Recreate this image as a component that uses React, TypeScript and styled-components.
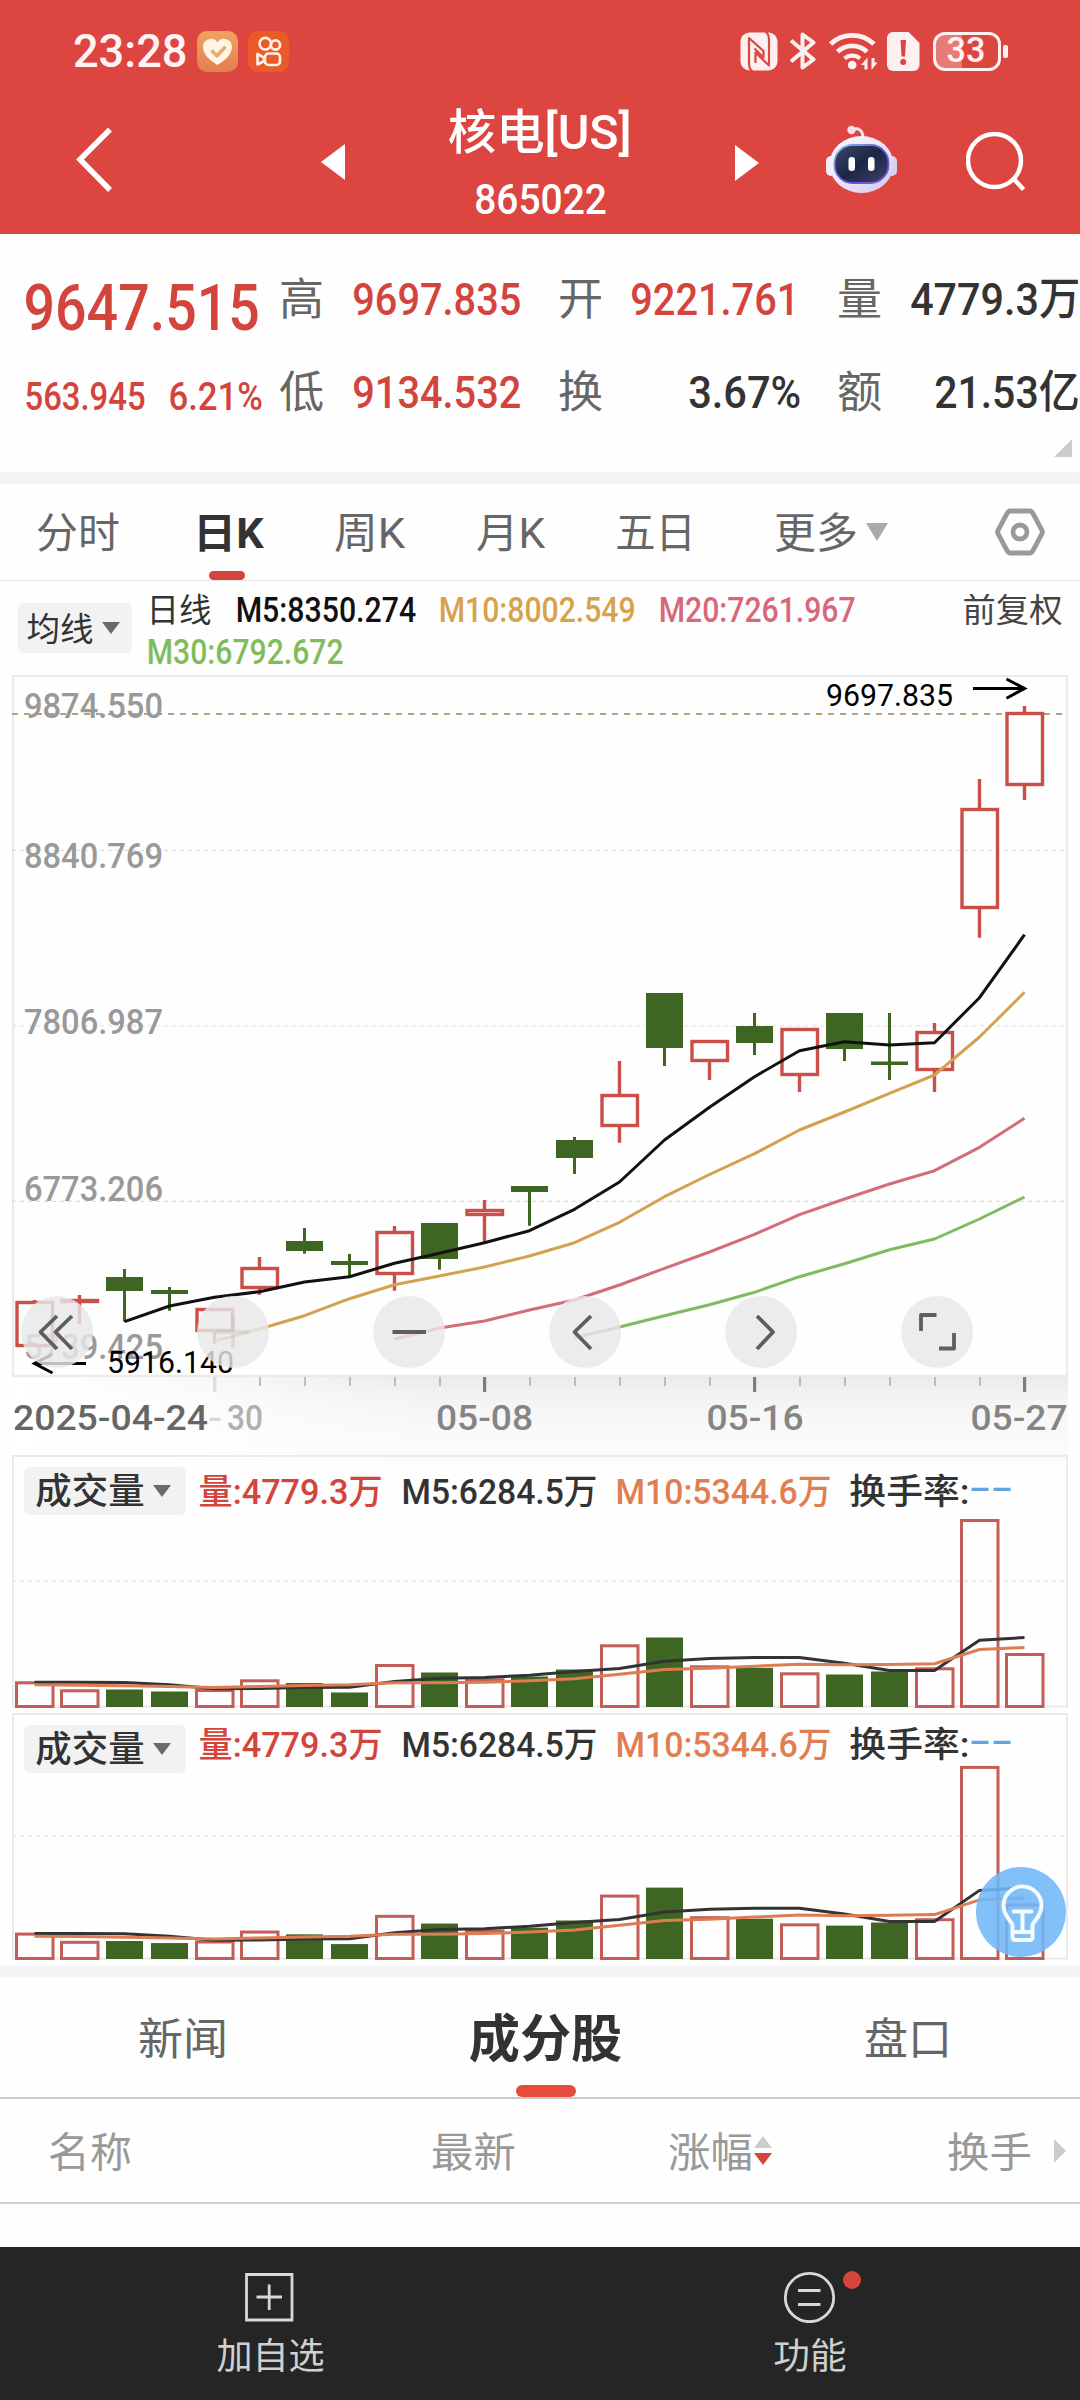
import React, { useLayoutEffect, useRef, useState } from "react";
import styled, { createGlobalStyle } from "styled-components";

const FONT = `Roboto, "Noto Sans CJK SC", sans-serif`;
const RED = "#d2443c";
const CANDLE_RED = "#c94f48";
const GREEN = "#3f6523";

const Global = createGlobalStyle`
  * { box-sizing: border-box; }
  body { margin: 0; background: #fff; font-family: ${FONT}; }
  svg { display: block; flex: none; }
`;

/* ---------- condensed text fitted to a given width ---------- */

const FitBox = styled.span<{ $w: number; $size: number; $ml: number; $lh?: number }>`
  display: block;
  flex: none;
  width: ${(p) => p.$w}px;
  margin-left: ${(p) => p.$ml}px;
  font-size: ${(p) => p.$size}px;
  line-height: ${(p) => (p.$lh ? `${p.$lh}px` : 1.2)};
`;
const FitInner = styled.span<{ $weight: number; $color: string }>`
  display: inline-block;
  white-space: pre;
  transform-origin: 0 50%;
  font-weight: ${(p) => p.$weight};
  color: ${(p) => p.$color};
`;

interface FitProps {
  w: number;
  size: number;
  ml?: number;
  dy?: number;
  lh?: number;
  weight?: number;
  color?: string;
  children: React.ReactNode;
}

function Fit({ w, size, ml = 0, dy = 1.5, lh, weight = 400, color = "#333", children }: FitProps) {
  const ref = useRef<HTMLSpanElement>(null);
  const [k, setK] = useState(1);
  const bearing = size * 0.045;
  useLayoutEffect(() => {
    if (ref.current) setK(w / (ref.current.offsetWidth - bearing * 2));
  }, [w, bearing]);
  return (
    <FitBox $w={w} $size={size} $ml={ml} $lh={lh}>
      <FitInner
        ref={ref}
        $weight={weight}
        $color={color}
        style={{ transform: `translate(${-bearing * k}px, ${dy}px) scaleX(${k})` }}
      >
        {children}
      </FitInner>
    </FitBox>
  );
}

/* ---------- page parts ---------- */

const Page = styled.div`
  width: 1080px;
  height: 2400px;
  display: flex;
  flex-direction: column;
  background: #fefefe;
  overflow: hidden;
`;
const Header = styled.header`
  height: 234px;
  flex: none;
  background: #dd4540;
`;
const StatusBar = styled.div`
  height: 102px;
  display: flex;
  align-items: center;
  padding: 0 72px 0 75px;
`;
const StatusApps = styled.div`
  display: flex;
  gap: 10px;
  margin-left: 12px;
`;
const StatusIcons = styled.div`
  display: flex;
  align-items: center;
  margin-left: auto;
`;
const Battery = styled.div`
  display: flex;
  align-items: center;
  gap: 2px;
  margin-left: 13px;
`;
const BatteryBody = styled.div`
  width: 68px;
  height: 39px;
  border: 3.5px solid #fdf0f0;
  border-radius: 12px;
  display: flex;
  align-items: center;
  background: linear-gradient(90deg, #e77b77 0 26px, transparent 26px);
`;
const BatteryNub = styled.div`
  width: 5px;
  height: 13px;
  border-radius: 2px;
  background: #fdf0f0;
`;
const Nav = styled.div`
  height: 132px;
  display: flex;
  align-items: center;
  padding: 0 52px 16px 75px;
`;
const NavTitle = styled.div`
  width: 390px;
  display: flex;
  flex-direction: column;
  align-items: center;
  margin-top: 9px;
`;
const NavIcon = styled.div<{ $ml?: number; $mt?: number }>`
  margin-left: ${(p) => p.$ml ?? 0}px;
  margin-top: ${(p) => p.$mt ?? 0}px;
`;

const Quote = styled.section`
  height: 238px;
  flex: none;
  display: flex;
  position: relative;
  padding: 18px 0 0 26px;
`;
const QuoteMain = styled.div`
  width: 255px;
  display: flex;
  flex-direction: column;
`;
const QuoteRow = styled.div<{ $h: number }>`
  height: ${(p) => p.$h}px;
  display: flex;
  align-items: center;
`;
const QuoteGrid = styled.div`
  display: flex;
  flex-direction: column;
`;
const QuoteCell = styled.div<{ $w: number; $pad?: number }>`
  width: ${(p) => p.$w}px;
  padding-right: ${(p) => p.$pad ?? 0}px;
  display: flex;
  justify-content: space-between;
  align-items: center;
`;
const Corner = styled.i`
  position: absolute;
  right: 8px;
  bottom: 15px;
  border-left: 18px solid transparent;
  border-bottom: 18px solid #ccc;
`;
const Band = styled.div`
  height: 12px;
  flex: none;
  background: #f4f4f4;
`;

const PeriodTabs = styled.nav`
  height: 97px;
  flex: none;
  display: flex;
  align-items: stretch;
  padding-left: 38px;
  border-bottom: 1.5px solid #e6e6e6;
`;
const PeriodTab = styled.div<{ $ml?: number }>`
  display: flex;
  align-items: center;
  position: relative;
  margin-left: ${(p) => p.$ml ?? 0}px;
`;
const TabMark = styled.i<{ $w: number; $h: number; $color: string; $x?: number }>`
  position: absolute;
  left: calc(50% - ${(p) => p.$w / 2 + (p.$x ?? 0)}px);
  bottom: 0;
  width: ${(p) => p.$w}px;
  height: ${(p) => p.$h}px;
  border-radius: ${(p) => p.$h / 2}px;
  background: ${(p) => p.$color};
`;
const Caret = styled.i<{ $w: number; $h: number; $color: string; $ml?: number }>`
  flex: none;
  margin-left: ${(p) => p.$ml ?? 0}px;
  border-left: ${(p) => p.$w / 2}px solid transparent;
  border-right: ${(p) => p.$w / 2}px solid transparent;
  border-top: ${(p) => p.$h}px solid ${(p) => p.$color};
`;

const Legend = styled.div`
  height: 94px;
  flex: none;
  display: flex;
  padding: 7px 0 0 18px;
`;
const Picker = styled.div<{ $w: number; $h: number; $pl: number; $mt?: number }>`
  width: ${(p) => p.$w}px;
  height: ${(p) => p.$h}px;
  margin-top: ${(p) => p.$mt ?? 0}px;
  padding-left: ${(p) => p.$pl}px;
  flex: none;
  display: flex;
  align-items: center;
  border-radius: 6px;
  background: #f2f2f2;
`;
const LegendLines = styled.div`
  width: 815px;
  padding-left: 16px;
  display: flex;
  flex-direction: column;
`;
const LegendRow = styled.div`
  height: 42px;
  display: flex;
  align-items: center;
`;

const ChartArea = styled.section`
  height: 780px;
  flex: none;
  position: relative;
`;
const AxisShade = styled.div`
  position: absolute;
  left: 12px;
  right: 12px;
  top: 702px;
  height: 84px;
  background: linear-gradient(90deg, #fff 0, rgba(255, 255, 255, 0.75) 150px, rgba(255, 255, 255, 0) 420px),
    linear-gradient(180deg, #ebebeb 0, #f4f4f4 22px, #fafafa 60px, #fbfbfb 100%);
`;
const ChartSvg = styled.svg`
  position: absolute;
  left: 0;
  top: 0;
`;
const Controls = styled.div`
  position: absolute;
  left: 21px;
  top: 621px;
  display: flex;
  gap: 104px;
`;
const Control = styled.button`
  width: 72px;
  height: 72px;
  padding: 0;
  border: 0;
  border-radius: 50%;
  background: rgba(232, 232, 232, 0.82);
`;

const VolPanel = styled.section<{ $h: number }>`
  height: ${(p) => p.$h}px;
  flex: none;
  position: relative;
`;
const VolHead = styled.div`
  position: relative;
  display: flex;
  align-items: flex-start;
  padding: 12px 0 0 24px;
`;
const VolText = styled.div<{ $mt: number }>`
  display: flex;
  align-items: center;
  height: 48px;
  margin-top: ${(p) => p.$mt}px;
`;
const Fab = styled.button`
  position: absolute;
  right: 14px;
  bottom: 8px;
  width: 90px;
  height: 90px;
  padding: 0;
  border: 0;
  border-radius: 50%;
  background: rgba(112, 183, 248, 0.88);
`;

const InfoTabs = styled.nav`
  height: 122px;
  flex: none;
  display: grid;
  grid-template-columns: 365px 361px 363px;
  border-bottom: 2px solid #c9c9c9;
`;
const InfoTab = styled.div`
  position: relative;
  display: flex;
  align-items: center;
  justify-content: center;
`;
const TableHead = styled.div`
  height: 105px;
  flex: none;
  display: flex;
  align-items: center;
  padding-left: 50px;
  border-bottom: 2px solid #d0d0d0;
`;
const SortMarks = styled.div`
  display: flex;
  flex-direction: column;
  gap: 5px;
  margin-left: 3px;
`;
const SortUp = styled.i`
  border-left: 9.5px solid transparent;
  border-right: 9.5px solid transparent;
  border-bottom: 12px solid #ccc;
`;
const NextMark = styled.i`
  margin-left: 24px;
  border-top: 12px solid transparent;
  border-bottom: 12px solid transparent;
  border-left: 12px solid #ccc;
`;
const BottomBar = styled.footer`
  height: 153px;
  flex: none;
  margin-top: auto;
  display: grid;
  grid-template-columns: 1fr 1fr;
  background: #252525;
`;
const BottomItem = styled.div`
  display: flex;
  flex-direction: column;
  align-items: center;
  padding-top: 24px;
  gap: 11px;
`;

/* ---------- data ---------- */

const X0 = 34.5;
const STEP = 45;
const cx = (i: number) => X0 + STEP * i;

// [up, body top, body bottom, wick top, wick bottom]
const candles: [boolean, number, number, number, number][] = [
  [true, 1301, 1347, 1300, 1347],
  [true, 1299, 1303, 1295, 1324],
  [false, 1277, 1291, 1269, 1321.6],
  [false, 1290, 1294, 1287, 1310.7],
  [true, 1308, 1332, 1308, 1343.7],
  [true, 1267, 1289, 1257, 1294.7],
  [false, 1241, 1251, 1228, 1253.7],
  [false, 1261, 1265, 1254, 1276],
  [true, 1231, 1275, 1226, 1290.7],
  [false, 1223, 1259, 1223, 1269.7],
  [true, 1209, 1216, 1200, 1242],
  [false, 1186, 1192, 1186, 1225.7],
  [false, 1140, 1158, 1137, 1174],
  [true, 1094, 1127, 1061, 1142.7],
  [false, 993, 1048, 993, 1066],
  [true, 1040, 1062, 1040, 1080],
  [false, 1026, 1043, 1013, 1055],
  [true, 1028, 1076, 1028, 1092],
  [false, 1013, 1049, 1013, 1061],
  [false, 1061.5, 1065, 1013, 1080],
  [true, 1031, 1071, 1023, 1092],
  [true, 808, 909, 779, 937.7],
  [true, 712, 786, 706, 800],
];

const ma5 = [1321.6, 1306, 1297.3, 1291.7, 1282, 1276.7, 1263.3, 1253.3, 1242.7, 1230.7, 1209.3, 1182, 1140, 1107.3, 1076.7, 1050.7, 1041.7, 1045, 1042.7, 997.7, 934.7];
const ma10 = [1341, 1329, 1315.7, 1298.7, 1284.7, 1276, 1267, 1256, 1242.7, 1222.3, 1196.7, 1174.5, 1153.7, 1130, 1112, 1093.3, 1075, 1037, 992.3];
const ma20 = [1339, 1328, 1321, 1310, 1300, 1285, 1268.3, 1252, 1234.3, 1214.7, 1199, 1184, 1170.7, 1147.3, 1118.3];
const ma30 = [1337.7, 1327, 1315.7, 1304.7, 1292.3, 1276.7, 1263.7, 1249.7, 1239, 1219, 1197];

const volumes = [26, 18, 18, 16, 18.3, 28, 24.5, 15, 43.3, 35, 29, 31, 38, 63, 70, 42, 39.7, 35, 33, 36, 40, 188.3, 54.3];
const vol5 = [25.3, 25.3, 25, 22.7, 18.7, 19, 20, 20.3, 26, 29.3, 30, 32.3, 36, 39, 46.3, 49, 50, 50, 44.3, 37, 37, 67.3, 70];
const vol10 = [22.7, 22.3, 21.7, 21, 20, 21, 22, 22.7, 24.7, 24.7, 25.3, 26.7, 28.7, 33.3, 38, 39.3, 41.3, 43.3, 42.7, 43, 43.7, 58, 60];

const line = (ys: number[]) => {
  const start = 23 - ys.length;
  return ys.map((y, i) => `${cx(start + i)},${y}`).join(" ");
};

const scaleLabels: [string, number][] = [
  ["9874.550", 718],
  ["8840.769", 867.7],
  ["7806.987", 1034],
  ["6773.206", 1200.7],
  ["5739.425", 1358.7],
];

/* ---------- charts ---------- */

function DateLabel({ x, y, w, color, children }: { x: number; y: number; w: number; color: string; children: string }) {
  return (
    <text x={x} y={y} fontSize={35} fontWeight={500} fill={color} textLength={w} lengthAdjust="spacingAndGlyphs">
      {children}
    </text>
  );
}

function PriceChart() {
  return (
    <ChartSvg width={1080} height={780} viewBox="0 675 1080 780" fontFamily={FONT}>
      <rect x={13} y={676} width={1054} height={700} fill="none" stroke="#eaeaea" strokeWidth={2.2} />
      <path d="M12 850.5H1066" stroke="#dadada" strokeWidth={1.2} strokeDasharray="4 4" />
      <path d="M12 1025.8H1066" stroke="#ececec" strokeWidth={2} strokeDasharray="4 4" />
      <path d="M12 1201.3H1066" stroke="#dcdcdc" strokeWidth={1.2} strokeDasharray="4 4" />
      <path d="M12 714H1063" stroke="#b0a478" strokeWidth={2} strokeDasharray="6 6" />

      {scaleLabels.map(([t, y]) => (
        <text key={t} x={24} y={y} fontSize={35.5} fontWeight={500} fill="#999" textLength={139} lengthAdjust="spacingAndGlyphs">
          {t}
        </text>
      ))}

      {candles.map(([up, top, bottom, hi, lo], i) => {
        const x = cx(i);
        return up ? (
          <g key={i} stroke={CANDLE_RED} strokeWidth={3.4} fill="none">
            <path d={`M${x} ${hi}V${top + 1}M${x} ${bottom - 1}V${lo}`} />
            <rect x={x - 17.5} y={top + 1.5} width={35.5} height={Math.max(bottom - top - 3, 0.8)} />
          </g>
        ) : (
          <g key={i} fill={GREEN}>
            <rect x={x - 1.5} y={hi} width={3} height={lo - hi} />
            <rect x={x - 18.5} y={top} width={37} height={bottom - top} />
          </g>
        );
      })}

      <g fill="none" strokeWidth={3} strokeLinejoin="round">
        <polyline points={line(ma30)} stroke="#82b964" />
        <polyline points={line(ma20)} stroke="#d26d79" />
        <polyline points={line(ma10)} stroke="#d3a251" />
        <polyline points={line(ma5)} stroke="#111" />
      </g>

      <g fill="none" stroke="#000" strokeWidth={3}>
        <path d="M973 688.6H1024M1006.5 679l18 9.6l-18 9.6" />
        <path d="M86 1363.6H35M52.5 1354l-18 9.6l18 9.4" />
      </g>
      <text x={826} y={706} fontSize={32} textLength={127} lengthAdjust="spacingAndGlyphs">
        9697.835
      </text>
      <text x={107} y={1372.5} fontSize={31} textLength={127} lengthAdjust="spacingAndGlyphs">
        5916.140
      </text>

      <rect x={213} y={1377} width={3.5} height={15} fill="#ddd" />
      {Array.from({ length: 18 }, (_, k) => k + 5).map((i) =>
        i === 10 || i === 16 || i === 22 ? (
          <rect key={i} x={cx(i) - 1.5} y={1377} width={3.2} height={15} fill="#7d7d7d" />
        ) : (
          <rect key={i} x={cx(i) - 0.5} y={1377} width={2} height={9} fill="#bcbcbc" />
        )
      )}
      <DateLabel x={13} y={1429.7} w={195} color="#666">2025-04-24</DateLabel>
      <DateLabel x={208} y={1429.7} w={14} color="#d6d6d6">-</DateLabel>
      <DateLabel x={227} y={1429.7} w={36} color="#b0b0b0">30</DateLabel>
      <DateLabel x={436} y={1429.7} w={97} color="#858585">05-08</DateLabel>
      <DateLabel x={706.5} y={1429.7} w={97} color="#858585">05-16</DateLabel>
      <DateLabel x={970.5} y={1429.7} w={97} color="#858585">05-27</DateLabel>
    </ChartSvg>
  );
}

function VolumeChart({ h, base, dash, k }: { h: number; base: number; dash: number; k: number }) {
  return (
    <ChartSvg width={1080} height={h} viewBox={`0 0 1080 ${h}`}>
      <rect x={13} y={1} width={1054} height={base - 2} fill="none" stroke="#eaeaea" strokeWidth={2} />
      <path d={`M12 ${dash}H1066`} stroke="#ebebeb" strokeWidth={2} strokeDasharray="4 4" />
      {volumes.map((v, i) =>
        candles[i][0] ? (
          <rect key={i} x={cx(i) - 18} y={base + 1.3 - v * k} width={36.5} height={v * k - 2.3} fill="none" stroke="#c25d58" strokeWidth={3} />
        ) : (
          <rect key={i} x={cx(i) - 18.5} y={base - v * k} width={37} height={v * k - 0.5} fill={GREEN} />
        )
      )}
      <g fill="none" strokeWidth={3} strokeLinejoin="round">
        <polyline points={line(vol5.map((v) => base - v * k))} stroke="#333" />
        <polyline points={line(vol10.map((v) => base - v * k))} stroke="#dd7d52" />
      </g>
    </ChartSvg>
  );
}

function VolumeSection({ h, base, dash, k, mt, fab }: { h: number; base: number; dash: number; k: number; mt: number; fab?: boolean }) {
  return (
    <VolPanel $h={h}>
      <VolumeChart h={h} base={base} dash={dash} k={k} />
      <VolHead>
        <Picker $w={162} $h={48} $pl={13}>
          <Fit w={106} size={36} dy={2} weight={500}>成交量</Fit>
          <Caret $w={18} $h={12} $color="#6a6a6a" $ml={10} />
        </Picker>
        <VolText $mt={mt}>
          <Fit w={181} size={35.5} ml={14} weight={500} color={RED}>量:4779.3万</Fit>
          <Fit w={193} size={35.5} ml={22} weight={500}>M5:6284.5万</Fit>
          <Fit w={213} size={35.5} ml={21} weight={500} color="#df7e52">M10:5344.6万</Fit>
          <Fit w={117} size={35.5} ml={21} weight={500}>换手率:</Fit>
          <Fit w={38} size={35.5} ml={4} dy={-2} weight={500} color="#62a5dc">--</Fit>
        </VolText>
      </VolHead>
      {fab && (
        <Fab>
          <svg width={90} height={90} viewBox="0 0 90 90" fill="none" stroke="#f4fbff" strokeWidth={4} strokeLinejoin="round" strokeLinecap="round">
            <path d="M36.5 58V70.5a2.5 2.5 0 0 0 2.5 2.5h15a2.5 2.5 0 0 0 2.5-2.5V58c0-3 9-8.5 9-19.5a19 19 0 0 0-38 0C27.5 49.5 36.5 55 36.5 58Z" />
            <path d="M37.5 44.5h18M46.5 44.5v19M37 65h19" />
          </svg>
        </Fab>
      )}
    </VolPanel>
  );
}

/* ---------- icons ---------- */

const HeartApp = () => (
  <svg width={41} height={41} viewBox="0 0 41 41">
    <defs>
      <linearGradient id="heartBg" x1="0" y1="0" x2="0" y2="1">
        <stop offset="0" stopColor="#f0a361" />
        <stop offset="1" stopColor="#e17f50" />
      </linearGradient>
    </defs>
    <rect width={41} height={41} rx={10} fill="url(#heartBg)" />
    <path d="M20.5 34C13 29.5 6 23.5 6 16a8 8 0 0 1 14.5-4.7A8 8 0 0 1 35 16c0 7.500-7 13.500-14.500 18Z" fill="#fff4e6" />
    <path d="M15.5 20.5l4.500 4.300 7.500-8" fill="none" stroke="#e5ae6e" strokeWidth={3.6} strokeLinecap="round" strokeLinejoin="round" />
  </svg>
);
const CameraApp = () => (
  <svg width={41} height={41} viewBox="0 0 41 41" fill="none" stroke="#fff3ea" strokeWidth={2.6} strokeLinejoin="round">
    <rect width={41} height={41} rx={10} fill="#ec5a2a" stroke="none" />
    <circle cx={17.3} cy={12.7} r={5.8} />
    <circle cx={27.5} cy={14} r={4.6} />
    <rect x={17} y={22.5} width={15} height={11.5} rx={3.6} />
    <path d="M9.5 23l6.500 3.600v3.600L9.500 33.500Z" />
  </svg>
);
const Nfc = () => (
  <svg width={38} height={39} viewBox="0 0 38 39">
    <rect x={0.5} y={0.5} width={37} height={38} rx={9} fill="#fdf0f0" />
    <g fill="none" stroke="#dd4540" strokeWidth={2.5} strokeLinejoin="round">
      <path d="M12.500 39.500Q9 37 9 31.500V6L23.500 18.500V6Q23.500 2.500 22 -1" stroke="none" />
      <path d="M12.500 39.500Q9 37 9 31.500V6L23.500 19V25.500L14.500 16.500" strokeWidth={2.2} />
      <path d="M25.500 -0.500Q29 2 29 7.500V33.500L15.500 20.500V31" strokeWidth={2.2} />
    </g>
  </svg>
);
const Bluetooth = () => (
  <svg width={26} height={38} viewBox="0 0 26 38" fill="none" stroke="#fdf0f0" strokeWidth={4} strokeLinejoin="round" strokeLinecap="butt">
    <path d="M1 8.500L23.500 27.500L12.500 35.500V2.500L23.500 10.500L1 29.500" />
  </svg>
);
const Wifi = () => (
  <svg width={49} height={38} viewBox="0 0 49 38" fill="none" stroke="#fdf0f0" strokeWidth={4.8}>
    <path d="M1.500 12a31.500 31.500 0 0 1 43.500 0" />
    <path d="M8.500 19.800a21.500 21.500 0 0 1 29.500 0" />
    <path d="M15.500 26.500a12 12 0 0 1 15.500 0" strokeWidth={4.2} />
    <circle cx={23.2} cy={33} r={4.3} fill="#fdf0f0" stroke="none" />
    <path d="M32 33l6.500-7.500v12h-3V33ZM48.500 30.500l-6 7.500V26h3v4.500Z" fill="#fdf0f0" stroke="none" />
  </svg>
);
const SimAlert = () => (
  <svg width={33} height={39} viewBox="0 0 33 39">
    <path d="M6 0H21.500L32.500 11V33a6 6 0 0 1-6 6H6a6 6 0 0 1-6-6V6A6 6 0 0 1 6 0Z" fill="#fdf0f0" />
    <path d="M13.500 8h5.500l-1 16.500h-3.500Z" fill="#dd4540" />
    <circle cx={16.2} cy={30} r={3} fill="#dd4540" />
  </svg>
);
const Robot = () => (
  <svg width={73} height={70} viewBox="0 0 73 70">
    <defs>
      <linearGradient id="shell" x1="0" y1="0" x2="1" y2="1">
        <stop offset="0" stopColor="#fffafd" />
        <stop offset="0.6" stopColor="#e6dff5" />
        <stop offset="1" stopColor="#c9c8ee" />
      </linearGradient>
      <linearGradient id="visor" x1="0" y1="0" x2="1" y2="1">
        <stop offset="0" stopColor="#3a4568" />
        <stop offset="0.5" stopColor="#1c2748" />
        <stop offset="1" stopColor="#3f4468" />
      </linearGradient>
      <linearGradient id="rim" x1="0" y1="0" x2="1" y2="1">
        <stop offset="0" stopColor="#82cde8" />
        <stop offset="0.5" stopColor="#6a4fd0" />
        <stop offset="1" stopColor="#7d58dd" />
      </linearGradient>
    </defs>
    <path d="M27 5c6-3 11 0 11 8" fill="none" stroke="#f8e4ec" strokeWidth={3} />
    <circle cx={26.5} cy={5} r={4.2} fill="#f8dfe8" />
    <rect x={1} y={31} width={10} height={20} rx={5} fill="#f1eef9" />
    <rect x={62} y={31} width={10} height={20} rx={5} fill="#d5d3f2" />
    <ellipse cx={36.5} cy={39.5} rx={32} ry={28.5} fill="url(#shell)" />
    <rect x={9.5} y={20} width={54} height={38} rx={18} fill="url(#visor)" stroke="url(#rim)" strokeWidth={1.8} />
    <rect x={23.5} y={32} width={6.5} height={14} rx={3.2} fill="#fff" />
    <rect x={43} y={32} width={6.5} height={14} rx={3.2} fill="#fff" />
  </svg>
);

const controlIcons: { d: string; color: string }[] = [
  { d: "M36 20L19.5 36L36 53M51 20L34.5 36L51 53", color: "#5e5e5e" },
  { d: "M19 36H52M36 19V52", color: "rgba(190, 190, 190, 0.35)" },
  { d: "M19.5 36H53", color: "#5e5e5e" },
  { d: "M42 20L25.5 36L42 53", color: "#5e5e5e" },
  { d: "M32 20L48 36L32 53", color: "#5e5e5e" },
  { d: "M35.5 19H20V35M38 52.5H53V37", color: "#5e5e5e" },
];

/* ---------- page ---------- */

export default function App() {
  return (
    <Page>
      <Global />
      <Header>
        <StatusBar>
          <Fit w={110} size={45.5} dy={0.5} weight={500} color="#fff3f3">23:28</Fit>
          <StatusApps>
            <HeartApp />
            <CameraApp />
          </StatusApps>
          <StatusIcons>
            <Nfc />
            <NavIcon $ml={12}><Bluetooth /></NavIcon>
            <NavIcon $ml={13}><Wifi /></NavIcon>
            <NavIcon $ml={9}><SimAlert /></NavIcon>
            <Battery>
              <BatteryBody>
                <Fit w={36} size={35} ml={11.5} dy={0} weight={500} color="#fff3f3">33</Fit>
              </BatteryBody>
              <BatteryNub />
            </Battery>
          </StatusIcons>
        </StatusBar>
        <Nav>
          <svg width={40} height={68} viewBox="0 0 40 68" fill="none" stroke="#fff" strokeWidth={5.5}>
            <path d="M35 3.500L5 33.500L35 64" />
          </svg>
          <NavIcon $ml={206} $mt={3}>
            <svg width={24} height={36}><path d="M24 0V36L0 18Z" fill="#fff" /></svg>
          </NavIcon>
          <NavTitle>
            <Fit w={180} size={48} lh={67} dy={1} weight={500} color="#fff">核电[US]</Fit>
            <Fit w={129} size={42} lh={67} dy={0.5} weight={500} color="#fff">865022</Fit>
          </NavTitle>
          <svg width={24} height={42}><path d="M0 6V42L24 24Z" fill="#fff" /></svg>
          <NavIcon $ml={66}><Robot /></NavIcon>
          <NavIcon $ml={68} $mt={5}>
            <svg width={62} height={62} viewBox="0 0 62 62" fill="none" stroke="#fff" strokeWidth={4.5}>
              <circle cx={28.5} cy={28.5} r={26.5} />
              <path d="M47 46L57.5 57.5" />
            </svg>
          </NavIcon>
        </Nav>
      </Header>

      <Quote>
        <QuoteMain>
          <QuoteRow $h={112}>
            <Fit w={231} size={64} dy={1} weight={500} color={RED}>9647.515</Fit>
          </QuoteRow>
          <QuoteRow $h={64}>
            <Fit w={118} size={38} weight={500} color={RED}>563.945</Fit>
            <Fit w={91} size={38} ml={26} weight={500} color={RED}>6.21%</Fit>
          </QuoteRow>
        </QuoteMain>
        <QuoteGrid>
          <QuoteRow $h={93}>
            <QuoteCell $w={279} $pad={40}>
              <Fit w={41} size={44} color="#666">高</Fit>
              <Fit w={166} size={45} dy={0.5} weight={500} color={RED}>9697.835</Fit>
            </QuoteCell>
            <QuoteCell $w={279} $pad={41}>
              <Fit w={41} size={44} color="#666">开</Fit>
              <Fit w={166} size={45} dy={0.5} weight={500} color={RED}>9221.761</Fit>
            </QuoteCell>
            <QuoteCell $w={239}>
              <Fit w={41} size={44} color="#666">量</Fit>
              <Fit w={166} size={45} dy={0.5} weight={500}>4779.3万</Fit>
            </QuoteCell>
          </QuoteRow>
          <QuoteRow $h={93}>
            <QuoteCell $w={279} $pad={40}>
              <Fit w={41} size={44} color="#666">低</Fit>
              <Fit w={166} size={45} dy={0.5} weight={500} color={RED}>9134.532</Fit>
            </QuoteCell>
            <QuoteCell $w={279} $pad={40}>
              <Fit w={41} size={44} color="#666">换</Fit>
              <Fit w={109} size={45} dy={0.5} weight={500}>3.67%</Fit>
            </QuoteCell>
            <QuoteCell $w={239}>
              <Fit w={41} size={44} color="#666">额</Fit>
              <Fit w={142} size={45} dy={0.5} weight={500}>21.53亿</Fit>
            </QuoteCell>
          </QuoteRow>
        </QuoteGrid>
        <Corner />
      </Quote>
      <Band />

      <PeriodTabs>
        <PeriodTab><Fit w={80} size={42} color="#666">分时</Fit></PeriodTab>
        <PeriodTab $ml={77}>
          <Fit w={67} size={42} weight={700}>日K</Fit>
          <TabMark $w={36} $h={9} $color={RED} $x={1.5} />
        </PeriodTab>
        <PeriodTab $ml={74}><Fit w={67} size={42} color="#666">周K</Fit></PeriodTab>
        <PeriodTab $ml={75}><Fit w={65} size={42} color="#666">月K</Fit></PeriodTab>
        <PeriodTab $ml={74}><Fit w={77} size={42} color="#666">五日</Fit></PeriodTab>
        <PeriodTab $ml={82}>
          <Fit w={80} size={42} color="#666">更多</Fit>
          <Caret $w={22} $h={18} $color="#aaa" $ml={10} />
        </PeriodTab>
        <PeriodTab $ml={107}>
          <svg width={50} height={48} viewBox="0 0 50 48" fill="none" stroke="#999" strokeWidth={4.8} strokeLinejoin="round">
            <path d="M15.5 3H34.5Q36.5 3 37.5 4.7L47 22.3Q47.8 24 47 25.7L37.5 43.3Q36.5 45 34.5 45H15.5Q13.5 45 12.5 43.3L3 25.7Q2.2 24 3 22.3L12.5 4.7Q13.5 3 15.5 3Z" />
            <circle cx={25} cy={24} r={7} />
          </svg>
        </PeriodTab>
      </PeriodTabs>

      <Legend>
        <Picker $w={114} $h={50} $pl={10} $mt={15}>
          <Fit w={64} size={33}>均线</Fit>
          <Caret $w={18} $h={12} $color="#6a6a6a" $ml={10} />
        </Picker>
        <LegendLines>
          <LegendRow>
            <Fit w={62} size={33}>日线</Fit>
            <Fit w={178} size={34.5} ml={27} weight={500} color="#111">M5:8350.274</Fit>
            <Fit w={194} size={34.5} ml={25} weight={500} color="#d8a24a">M10:8002.549</Fit>
            <Fit w={194} size={34.5} ml={26} weight={500} color="#d7687a">M20:7261.967</Fit>
          </LegendRow>
          <LegendRow>
            <Fit w={194} size={34.5} weight={500} color="#80bc5c">M30:6792.672</Fit>
          </LegendRow>
        </LegendLines>
        <LegendRow>
          <Fit w={97} size={33} ml={17} color="#444">前复权</Fit>
        </LegendRow>
      </Legend>

      <ChartArea>
        <AxisShade />
        <PriceChart />
        <Controls>
          {controlIcons.map(({ d, color }) => (
            <Control key={d}>
              <svg width={72} height={72} viewBox="0 0 72 72" fill="none" stroke={color} strokeWidth={3.8} strokeLinejoin="round">
                <path d={d} />
              </svg>
            </Control>
          ))}
        </Controls>
      </ChartArea>

      <VolumeSection h={258} base={252.5} dash={126} k={1} mt={-1} />
      <VolumeSection h={252} base={246.5} dash={123} k={1.027} mt={-6} fab />
      <Band />

      <InfoTabs>
        <InfoTab><Fit w={86} size={44} dy={2.5} color="#666">新闻</Fit></InfoTab>
        <InfoTab>
          <Fit w={149} size={51} dy={2.5} weight={700}>成分股</Fit>
          <TabMark $w={60} $h={12} $color="#e64c3c" />
        </InfoTab>
        <InfoTab><Fit w={84} size={44} dy={2.5} color="#666">盘口</Fit></InfoTab>
      </InfoTabs>
      <TableHead>
        <Fit w={80} size={41} dy={2.5} color="#999">名称</Fit>
        <Fit w={81} size={41} ml={303} dy={2.5} color="#999">最新</Fit>
        <Fit w={81} size={41} ml={156} dy={2.5} color="#999">涨幅</Fit>
        <SortMarks>
          <SortUp />
          <Caret $w={19} $h={12} $color={RED} />
        </SortMarks>
        <Fit w={81} size={41} ml={177} dy={2.5} color="#999">换手</Fit>
        <NextMark />
      </TableHead>

      <BottomBar>
        <BottomItem>
          <svg width={54} height={52} viewBox="0 0 54 52" fill="none" stroke="#d8d8d8" strokeWidth={2.8}>
            <path d="M3.5 3.5H49V49H3.5ZM13.5 26H39M26.2 13.5V39" />
          </svg>
          <Fit w={105} size={36} color="#d0d0d0">加自选</Fit>
        </BottomItem>
        <BottomItem>
          <svg width={104} height={52} viewBox="0 0 104 52" fill="none" stroke="#d8d8d8" strokeWidth={2.8}>
            <circle cx={51.5} cy={26.5} r={24.2} />
            <path d="M40 19.5H62.5M40 33.5H62.5" />
            <circle cx={94} cy={9} r={9} fill="#d8453c" stroke="none" />
          </svg>
          <Fit w={70} size={36} color="#d0d0d0">功能</Fit>
        </BottomItem>
      </BottomBar>
    </Page>
  );
}
